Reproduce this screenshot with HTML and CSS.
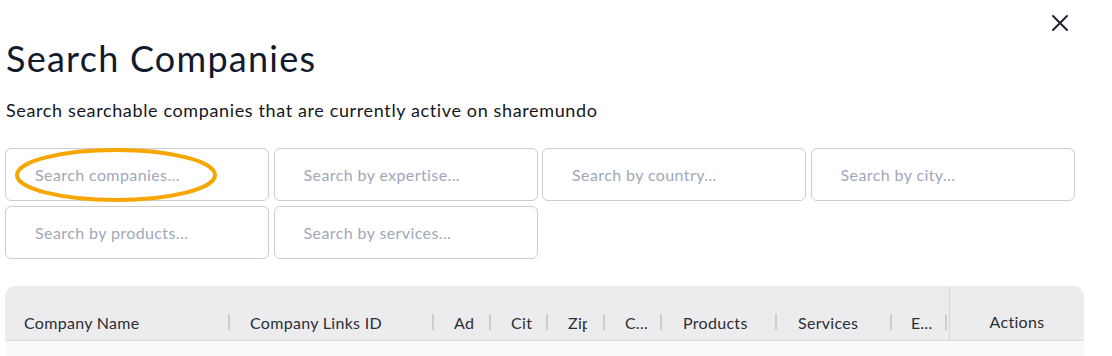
FILE: index.html
```html
<!DOCTYPE html>
<html lang="en">

<head>
  <meta charset="UTF-8">
  <meta name="viewport" content="width=device-width, initial-scale=1.0">
  <title>Search Companies</title>
  <link rel="stylesheet" href="styles.css">
</head>

<body>
  <div class="modal">
    <div class="top-bar">
      <button class="close-button" aria-label="Close">
        <svg width="18" height="18" viewBox="0 0 18 18">
          <path d="M2 2 L16 16 M16 2 L2 16" stroke="#1f2433" stroke-width="2" fill="none" stroke-linecap="round"/>
        </svg>
      </button>
    </div>
    <h1 class="title">Search Companies</h1>
    <p class="subtitle">Search searchable companies that are currently active on sharemundo</p>

    <div class="search-grid">
      <div class="search-field highlighted">
        <input type="text" placeholder="Search companies...">
        <svg class="marker" width="210" height="60" viewBox="0 0 210 60">
          <ellipse cx="105" cy="29" rx="99" ry="25" fill="none" stroke="#f7a600" stroke-width="4"/>
        </svg>
      </div>
      <div class="search-field"><input type="text" placeholder="Search by expertise..."></div>
      <div class="search-field"><input type="text" placeholder="Search by country..."></div>
      <div class="search-field"><input type="text" placeholder="Search by city..."></div>
      <div class="search-field"><input type="text" placeholder="Search by products..."></div>
      <div class="search-field"><input type="text" placeholder="Search by services..."></div>
    </div>

    <div class="data-table">
      <div class="table-header">
        <div class="header-cells">
          <div class="col col-name"><span class="col-title">Company Name</span><span class="sep"></span></div>
          <div class="col col-links"><span class="col-title">Company Links ID</span><span class="sep"></span></div>
          <div class="col col-small"><span class="col-title clip addr">Address</span><span class="sep"></span></div>
          <div class="col col-small"><span class="col-title clip city">City</span><span class="sep"></span></div>
          <div class="col col-small"><span class="col-title clip zip">Zip</span><span class="sep"></span></div>
          <div class="col col-small"><span class="col-title">Country</span><span class="sep"></span></div>
          <div class="col col-medium"><span class="col-title">Products</span><span class="sep"></span></div>
          <div class="col col-medium"><span class="col-title">Services</span><span class="sep"></span></div>
          <div class="col col-email"><span class="col-title">Email</span><span class="sep"></span></div>
        </div>
        <div class="col-actions">Actions</div>
      </div>
      <div class="table-body"></div>
    </div>
  </div>
</body>

</html>
```

FILE: styles.css
```css
body {
  margin: 0;
  padding: 0;
  background-color: #fff;
  font-family: 'Lato', sans-serif;
  color: #111827;
}

.modal {
  padding: 0 28px 0 5px;
}

.top-bar {
  display: flex;
  justify-content: flex-end;
  height: 36px;
  padding-top: 14px;
  box-sizing: border-box;
}

.close-button {
  background: none;
  border: none;
  padding: 0;
  width: 18px;
  height: 18px;
  margin-right: 15px;
  cursor: pointer;
}

.title {
  margin: 0;
  padding-left: 1px;
  font-size: 36px;
  font-weight: 400;
  line-height: 44px;
  letter-spacing: 1.25px;
  color: #111a2c;
}

.subtitle {
  margin: 18px 0 0 0;
  padding-left: 1px;
  font-size: 18px;
  line-height: 24px;
  letter-spacing: 0.63px;
  color: #15171c;
}

.search-grid {
  display: grid;
  grid-template-columns: repeat(4, 264px);
  grid-auto-rows: 53px;
  column-gap: 4.5px;
  row-gap: 5px;
  margin-top: 26px;
}

.search-field {
  position: relative;
}

.search-field input {
  width: 100%;
  height: 100%;
  box-sizing: border-box;
  border: 1px solid #cdcdd0;
  border-radius: 6px;
  padding: 0 20px 0 29px;
  font-family: 'Lato', sans-serif;
  font-size: 16px;
  letter-spacing: 0.4px;
  color: #333;
  background: #fff;
  outline: none;
}

.search-field input::placeholder {
  color: #a1a7b8;
}

.marker {
  position: absolute;
  left: 6px;
  top: -2px;
  pointer-events: none;
}

.data-table {
  margin-top: 27px;
  width: 1079px;
  border-radius: 10px 10px 0 0;
  overflow: hidden;
}

.table-header {
  display: flex;
  height: 54px;
  background-color: #ececef;
  border-bottom: 1px solid #dadadc;
  font-size: 16px;
  letter-spacing: 0.3px;
  color: #2b2e35;
}

.header-cells {
  display: flex;
  align-items: flex-end;
  padding-bottom: 8px;
  box-sizing: border-box;
}

.col {
  display: flex;
  align-items: center;
  justify-content: space-between;
  padding-left: 19px;
  box-sizing: border-box;
  height: 20px;
}

.col-name {
  width: 225px;
}

.col-links {
  width: 204px;
  padding-left: 20px;
}

.col-small {
  width: 57px;
  padding-left: 20px;
}

.col-medium {
  width: 115px;
  padding-left: 21px;
}

.col-email {
  width: 55px;
  padding-left: 19px;
}

.col-title {
  white-space: nowrap;
  overflow: hidden;
  text-overflow: ellipsis;
  max-width: calc(100% - 10px);
}

.col-small .col-title,
.col-email .col-title {
  width: 22px;
}

.col-title.clip {
  text-overflow: clip;
}

.col-small .col-title.addr {
  width: 21px;
}

.col-small .col-title.city {
  width: 21px;
}

.col-small .col-title.zip {
  width: 19px;
}

.sep {
  flex-shrink: 0;
  width: 2px;
  height: 16px;
  background-color: #cfcfd2;
}

.col-actions {
  flex: 1;
  border-left: 1px solid #d6d6d9;
  display: flex;
  align-items: flex-end;
  justify-content: center;
  padding-bottom: 8px;
  line-height: 20px;
  margin-left: 2px;
}

.table-body {
  height: 15px;
  background-color: #f8f9fb;
}
```
